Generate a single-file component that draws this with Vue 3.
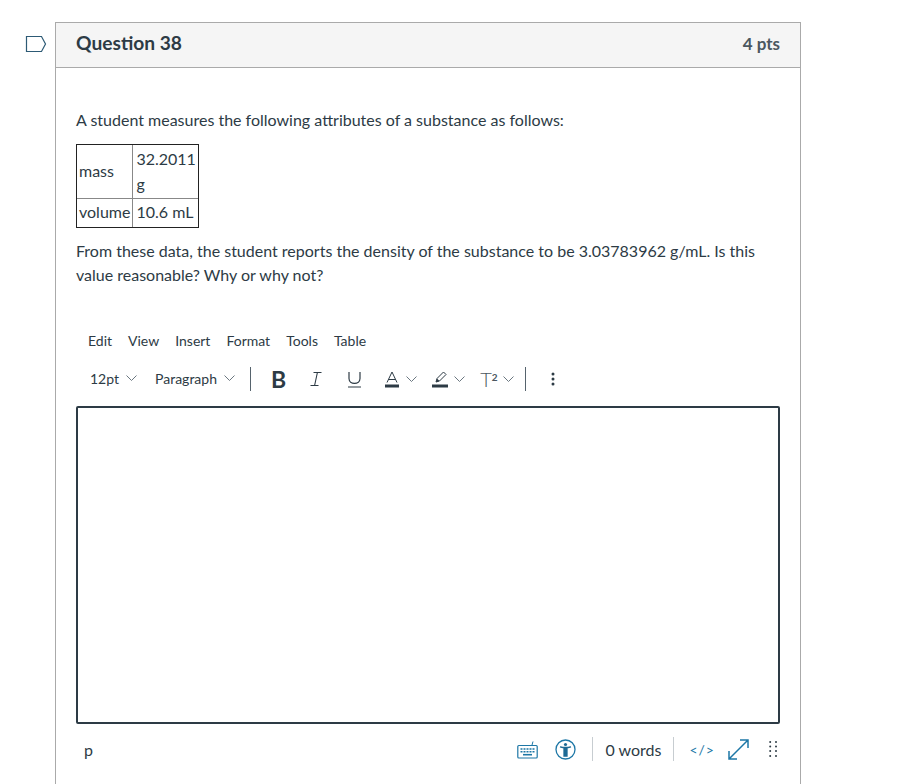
<script setup>
const menus = ['Edit', 'View', 'Insert', 'Format', 'Tools', 'Table']
</script>

<template>
  <div class="page">
    <section class="card">
      <svg class="flag" width="22" height="18" viewBox="0 0 22 18" fill="none">
        <path d="M1.5 1.5H16.5L20.5 9L16.5 16.5H1.5Z" stroke="#2d5a75" stroke-width="1.2" />
      </svg>
      <header class="head">
        <h2>Question 38</h2>
        <span class="pts">4 pts</span>
      </header>
      <div class="body">
        <p class="lead">A student measures the following attributes of a substance as follows:</p>
        <table class="data">
          <tbody>
            <tr><td class="key">mass</td><td class="val">32.2011 g</td></tr>
            <tr><td class="key">volume</td><td class="val">10.6 mL</td></tr>
          </tbody>
        </table>
        <p class="para">From these data, the student reports the density of the substance to be 3.03783962 g/mL. Is this value reasonable? Why or why not?</p>

        <div class="menubar">
          <span v-for="m in menus" :key="m">{{ m }}</span>
        </div>

        <div class="toolbar">
          <span class="drop t1">12pt
            <svg class="chev" viewBox="0 0 11 6"><path d="M.5 .5L5.5 5.5L10.5 .5" /></svg>
          </span>
          <span class="drop t2">Paragraph
            <svg class="chev" viewBox="0 0 11 6"><path d="M.5 .5L5.5 5.5L10.5 .5" /></svg>
          </span>
          <i class="sep s1"></i>
          <span class="bold">B</span>
          <svg class="ic italic" width="12" height="16" viewBox="0 0 12 16" fill="none" stroke="#2d3b45">
            <path d="M3.5 1.5H11.5M.5 14.5H8.5M7.4 1.5L4.6 14.5" stroke-width="1.1" />
          </svg>
          <svg class="ic under" width="15" height="17" viewBox="0 0 15 17" fill="none" stroke="#2d3b45">
            <path d="M2 1V7.5C2 14 13 14 13 7.5V1M1 16H14" stroke-width="1.2" />
          </svg>
          <span class="grp g-a">
            <svg width="14" height="17" viewBox="0 0 14 17" fill="none">
              <path d="M2 11.5L7 1L12 11.5M3.6 8.5H10.4" stroke="#2d3b45" stroke-width="1" />
              <rect y="13.5" width="14" height="3" fill="#2d3b45" />
            </svg>
            <svg class="chev" viewBox="0 0 11 6"><path d="M.5 .5L5.5 5.5L10.5 .5" /></svg>
          </span>
          <span class="grp g-h">
            <svg width="16" height="17" viewBox="0 0 16 17" fill="none">
              <path d="M4 11L5 7.5L11.5 1L14 3.5L7.5 10L4 11Z" stroke="#2d3b45" stroke-width="1" />
              <path d="M4 11L5 7.5L7.5 10Z" fill="#2d3b45" />
              <rect y="13.5" width="16" height="3" fill="#2d3b45" />
            </svg>
            <svg class="chev c6" viewBox="0 0 11 6"><path d="M.5 .5L5.5 5.5L10.5 .5" /></svg>
          </span>
          <span class="grp g-t">
            <span class="sup">T<small>2</small></span>
            <svg class="chev c5" viewBox="0 0 11 6"><path d="M.5 .5L5.5 5.5L10.5 .5" /></svg>
          </span>
          <i class="sep s2"></i>
          <svg class="more" width="4" height="14" viewBox="0 0 4 14" fill="#2d3b45">
            <circle cx="2" cy="2" r="1.5" /><circle cx="2" cy="7" r="1.5" /><circle cx="2" cy="12" r="1.5" />
          </svg>
        </div>

        <div class="editor"></div>

        <div class="status">
          <span class="path">p</span>
          <svg class="kbd" width="21" height="19" viewBox="0 0 21 19" fill="none" stroke="#1d77a6">
            <path d="M15 5L16 1.5" stroke-width="1" />
            <rect x="0.8" y="5.5" width="19.4" height="12.5" rx="1" stroke-width="1.2" />
            <path d="M3.5 9H17.5M3.5 11.7H17.5" stroke-width="1.6" stroke-dasharray="2 1" />
            <path d="M6 14.7H15" stroke-width="1.6" />
          </svg>
          <svg class="a11y" width="21" height="21" viewBox="0 0 21 21" fill="none">
            <circle cx="10.5" cy="10.5" r="9.5" stroke="#1d77a6" stroke-width="1.3" />
            <circle cx="10.5" cy="5.5" r="1.6" fill="#1d6a94" />
            <path d="M5 7.8L9 9V17H12V9L16 7.8" stroke="#1d6a94" stroke-width="1.3" fill="#1d6a94" />
          </svg>
          <i class="vline v1"></i>
          <span class="words">0 words</span>
          <i class="vline v2"></i>
          <span class="code">&lt;/&gt;</span>
          <svg class="expand" width="21" height="21" viewBox="0 0 21 21" fill="none" stroke="#1d77a6" stroke-width="1.5">
            <path d="M1 20L20 1M12 1H20V9M1 12V20H9" />
          </svg>
          <svg class="grip" width="9" height="17" viewBox="0 0 9 17" fill="#2d3b45">
            <circle v-for="y in [1, 5.5, 10, 15]" :key="'a' + y" cx="1.2" :cy="y" r="1" />
            <circle v-for="y in [1, 5.5, 10, 15]" :key="'b' + y" cx="7" :cy="y" r="1" />
          </svg>
        </div>
      </div>
    </section>
  </div>
</template>

<style>
html, body { margin: 0; background: #fff; overflow: hidden; }
</style>

<style scoped>
.page {
  height: 784px;
  overflow: hidden;
  padding: 22px 0 0 55px;
  box-sizing: border-box;
  font-family: Lato, "Liberation Sans", sans-serif;
  color: #2d3b45;
}
.card {
  position: relative;
  width: 746px;
  min-height: 900px;
  box-sizing: border-box;
  border: 1px solid #aaa;
}
.flag { position: absolute; left: -31px; top: 12px; }
.head {
  display: flex;
  justify-content: space-between;
  align-items: center;
  height: 45px;
  box-sizing: border-box;
  padding: 0 20px 4px;
  background: #f5f5f5;
  border-bottom: 1px solid #aaa;
}
h2 { margin: 0; font-size: 19.2px; font-weight: 700; line-height: 40px; }
.pts { font-size: 17px; font-weight: 700; color: #4b5760; }
.body { padding: 40px 20px 0; font-size: 16px; }
.lead { margin: 0 0 12px; line-height: 24px; }
.data {
  border-collapse: separate;
  border-spacing: 0;
  border: 1px solid #222;
  font-size: 16px;
  line-height: 25px;
}
.data td { padding: 1px 2px 2px; border-bottom: 1px solid #888; }
.data tr:last-child td { border-bottom: 0; padding-top: 0; padding-bottom: 3px; }
.data tr:first-child .key { padding: 0 2px 3px; }
.data .key { border-right: 1px solid #888; }
.data .val { width: 61px; padding-left: 3px; padding-right: 1px; }
.para { margin: 11px 0 0; line-height: 24px; }
.menubar {
  display: flex;
  gap: 16px;
  margin: 41px 0 0 12px;
  height: 24px;
  align-items: center;
  font-size: 14px;
}
.toolbar {
  display: flex;
  align-items: center;
  height: 24px;
  margin: 15px 0 0 14px;
  font-size: 14px;
}
.drop { display: inline-flex; align-items: center; padding-bottom: 2px; }
.chev { width: 11px; height: 6px; fill: none; stroke: #6b7780; stroke-width: 1; margin-left: 7px; }
.c6 { margin-left: 6px; }
.c5 { margin-left: 5px; }
.t2 { margin-left: 18px; }
.sep { width: 1px; height: 24px; background: #56636d; }
.s1 { margin-left: 15px; }
.bold { font-size: 23px; font-weight: 700; margin-left: 20px; line-height: 24px; }
.italic { margin-left: 24px; }
.under { margin-left: 25px; }
.grp { display: inline-flex; align-items: center; }
.g-a { margin-left: 23px; }
.g-h { margin-left: 15px; }
.g-t { margin-left: 15px; }
.sup { font-size: 20px; font-weight: 300; color: #4b5760; line-height: 1; }
.sup small { font-size: 10px; vertical-align: 6px; font-weight: 700; }
.s2 { margin-left: 11px; }
.more { margin-left: 25px; }
.editor {
  height: 314px;
  margin-top: 15px;
  border: 2px solid #2d3b45;
  border-radius: 2px;
}
.status {
  display: flex;
  align-items: center;
  height: 24px;
  margin-top: 13px;
  padding: 0 2px 0 8px;
}
.path { font-size: 16px; margin-right: auto; }
.a11y { margin-left: 17px; }
.vline { width: 1px; height: 24px; background: #c7cdd1; }
.v1 { margin-left: 16px; }
.words { margin-left: 12px; }
.v2 { margin-left: 12px; }
.code { margin-left: 15px; color: #1d77a6; font-size: 14px; letter-spacing: 1px; }
.expand { margin-left: 13px; }
.grip { margin-left: 20px; }
</style>
